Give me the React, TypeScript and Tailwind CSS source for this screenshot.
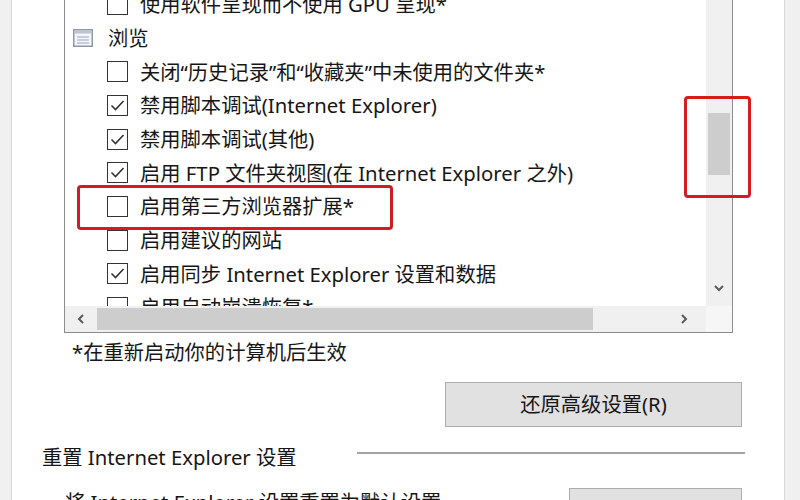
import React from "react"

type Row =
  | { kind: "group"; label: string }
  | { kind: "check"; label: string; checked: boolean }

const rows: Row[] = [
  { kind: "check", label: "使用软件呈现而不使用 GPU 呈现*", checked: false },
  { kind: "group", label: "浏览" },
  { kind: "check", label: "关闭“历史记录”和“收藏夹”中未使用的文件夹*", checked: false },
  { kind: "check", label: "禁用脚本调试(Internet Explorer)", checked: true },
  { kind: "check", label: "禁用脚本调试(其他)", checked: true },
  { kind: "check", label: "启用 FTP 文件夹视图(在 Internet Explorer 之外)", checked: true },
  { kind: "check", label: "启用第三方浏览器扩展*", checked: false },
  { kind: "check", label: "启用建议的网站", checked: false },
  { kind: "check", label: "启用同步 Internet Explorer 设置和数据", checked: true },
  { kind: "check", label: "启用自动崩溃恢复*", checked: false },
]

const Checkbox: React.FC<{ checked: boolean }> = ({ checked }) => (
  <div className="flex h-[21px] w-[21px] shrink-0 items-center justify-center border-[1.5px] border-[#333] bg-white">
    {checked && (
      <svg width="15" height="13" viewBox="0 0 15 13" fill="none">
        <path d="M1.5 6.5 L5.5 10.5 L13.5 2" stroke="#333" strokeWidth="1.6" />
      </svg>
    )}
  </div>
)

const GroupIcon = () => (
  <svg width="20" height="18" viewBox="0 0 20 18" className="shrink-0">
    <rect x="0.75" y="0.75" width="18.5" height="16.5" fill="#f4f6f9" stroke="#8e99aa" strokeWidth="1.5" />
    <rect x="1.5" y="1.5" width="17" height="3" fill="#b9c4d4" />
    <path d="M4 8 H16 M4 11 H16 M4 14 H16" stroke="#9aa6b8" strokeWidth="1.2" />
  </svg>
)

const Chevron: React.FC<{ dir: "left" | "right" | "down" }> = ({ dir }) => {
  const d = dir === "left" ? "M6 1 L2 5 L6 9" : dir === "right" ? "M2 1 L6 5 L2 9" : "M1 2 L5 6 L9 2"
  const w = dir === "down" ? 10 : 8
  const h = dir === "down" ? 8 : 10
  return (
    <svg width={w} height={h} viewBox={`0 0 ${w} ${h}`} fill="none">
      <path d={d} stroke="#5a5a5a" strokeWidth="2" />
    </svg>
  )
}

export default function App() {
  return (
    <div className="relative flex h-[500px] w-[800px] overflow-hidden bg-white font-['Noto_Sans','Noto_Sans_CJK_SC',sans-serif] text-[20.3px] text-[#161616]">
      <div className="w-[12px] shrink-0 border-r border-[#d6d6d6] bg-[#f0f0f0]" />

      <div className="flex flex-1 flex-col overflow-hidden">
        {/* settings list */}
        <div className="ml-[52px] grid h-[333px] w-[669px] shrink-0 grid-cols-[1fr_26px] grid-rows-[1fr_26px] border-x border-b border-[#8c8c8c]">
          <div className="overflow-hidden">
            <div className="-mt-[12.4px]">
              {rows.map((row, i) =>
                row.kind === "group" ? (
                  <div key={i} className="flex h-[33.7px] items-center gap-[15px] pl-[8px] whitespace-nowrap">
                    <GroupIcon />
                    <span>{row.label}</span>
                  </div>
                ) : (
                  <div key={i} className="flex h-[33.7px] items-center gap-[12px] pl-[42px] whitespace-nowrap">
                    <Checkbox checked={row.checked} />
                    <span>{row.label}</span>
                  </div>
                )
              )}
            </div>
          </div>

          <div className="flex flex-col items-center bg-[#f0f0f0]">
            <div className="mt-[113px] h-[62px] w-[22px] bg-[#cdcdcd]" />
            <div className="flex-1" />
            <div className="mb-[8px] flex h-[20px] items-center">
              <Chevron dir="down" />
            </div>
          </div>

          <div className="flex items-center bg-[#f0f0f0]">
            <div className="flex w-[32px] justify-center">
              <Chevron dir="left" />
            </div>
            <div className="h-[22px] w-[496px] bg-[#cdcdcd]" />
            <div className="flex-1" />
            <div className="mr-[10px] flex w-[24px] justify-center">
              <Chevron dir="right" />
            </div>
          </div>
          <div className="bg-[#f6f6f6]" />
        </div>

        <div className="ml-[60px] flex h-[38px] shrink-0 items-center whitespace-nowrap">*在重新启动你的计算机后生效</div>

        <button className="ml-[433px] mt-[11px] h-[45px] w-[297px] shrink-0 border border-[#adadad] bg-[#e1e1e1] text-[20.3px] text-[#161616]">
          还原高级设置(R)
        </button>

        <div className="mt-[16px] flex h-[28px] shrink-0 items-start">
          <span className="ml-[30px] leading-[28px] whitespace-nowrap">重置 Internet Explorer 设置</span>
          <div className="ml-auto mr-[39px] mt-[9px] h-[2px] w-[388px] bg-[#a5a5a5]" />
        </div>

        <div className="mt-[17px] flex shrink-0 items-start">
          <span className="ml-[53px] leading-[28px] whitespace-nowrap">将 Internet Explorer 设置重置为默认设置</span>
          <div className="ml-auto mr-[42px] h-[40px] w-[173px] shrink-0 border border-[#adadad] bg-[#e1e1e1]" />
        </div>
      </div>

      <div className="w-[16px] shrink-0 border-l border-[#d6d6d6] bg-[#f0f0f0]" />

      {/* annotation boxes */}
      <div className="absolute left-[684px] top-[96px] h-[102px] w-[67px] rounded-[4px] border-[3px] border-[#d21d1d]" />
      <div className="absolute left-[77px] top-[185px] h-[45px] w-[316px] rounded-[4px] border-[3px] border-[#d21d1d]" />
    </div>
  )
}
